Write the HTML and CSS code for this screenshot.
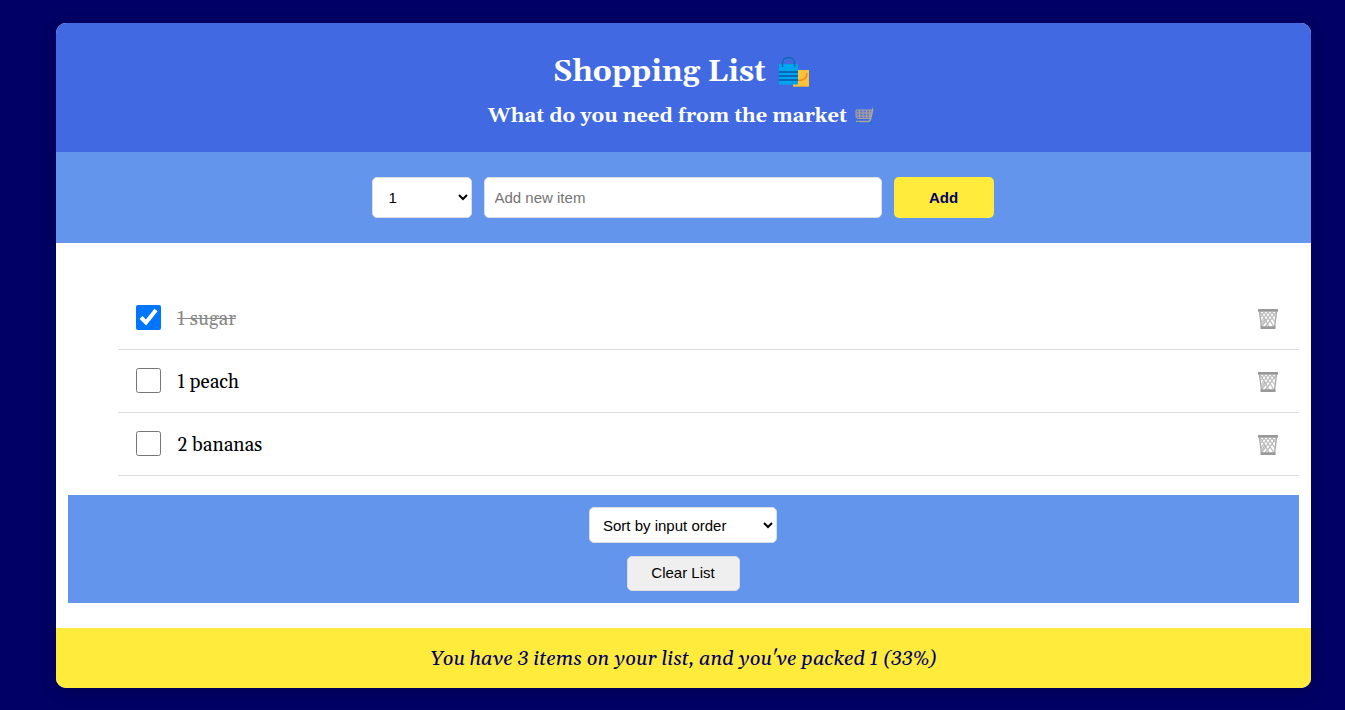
FILE: index.html
```html
<!DOCTYPE html>
<html lang="en">
<head>
<meta charset="utf-8">
<meta name="viewport" content="width=device-width, initial-scale=1">
<title>Shopping List</title>
<link rel="stylesheet" href="styles.css">
</head>
<body>
<svg class="defs" aria-hidden="true">
  <symbol id="bin" viewBox="0 0 22 22">
    <path d="M2.500 3.500 4.500 19.500M19.500 3.500 17.500 19.500" stroke="#aaa" stroke-width="1.4" fill="none"/>
    <path d="M3 4 8 11 4 17M7 4 14 14 17 19M11 4 18 14M15 4 18 8M19 4 12 14 8 19M15 4 8 14 5 18M11 4 4 14M7 4 4 9M8 11 12 19" stroke="#bcbcbc" stroke-width="1.3" fill="none"/>
    <path d="M1 1H21V3.700H1zM3.500 18.200H18.500V21H3.500z" fill="#999"/>
  </symbol>
</svg>
<main class="card">
  <header class="header">
    <h1 class="title">Shopping List
      <svg class="bags" viewBox="0 0 32 32" aria-hidden="true">
        <path d="M15 14H31V29.500Q31 31 29.500 31H15z" fill="#fcc23c"/>
        <path d="M15 30.500H30" stroke="#c9a354"/>
        <path d="M20 24.500C26 24.500 29 22 29 17" stroke="#f7861c" stroke-width="1.500" fill="none"/>
        <path d="M1 8H20V28.500H1z" fill="#00a4ef"/>
        <path d="M1 16H20M1 20H20M1 24H20" stroke="#0669b5" stroke-width="2"/>
        <path d="M4.500 11V7C4.500-.500 16.500-.500 16.500 7V11" stroke="#0669b5" stroke-width="1.500" fill="none"/>
      </svg>
    </h1>
    <h2 class="subtitle">What do you need from the market
      <svg class="cart" viewBox="0 0 20 18" aria-hidden="true">
        <path d="M1 3H17L15 11.500H3Q1 11.500 1 9z" fill="#a8a29c" fill-opacity=".3"/>
        <path d="M1 3H17L15 11.500H3Q1 11.500 1 9zM1 6H16M1 9H15.500M4.500 3V11.500M8 3V11.500M11.500 3V11.500M14.500 3V11" stroke="#a8a29c" stroke-width="1" fill="none"/>
        <path d="M19 1.500H18L15.500 12.500 14 14.500H1" stroke="#aaa49e" stroke-width="1.500" fill="none"/>
        <circle cx="3" cy="16" r="1.300" fill="#147fc0"/><circle cx="16" cy="16" r="1.300" fill="#147fc0"/>
        <path d="M18 1.500H20" stroke="#147fc0" stroke-width="1.500"/>
      </svg>
    </h2>
  </header>
  <form class="add-form">
    <select class="control quantity" aria-label="Quantity"><option>1</option><option>2</option><option>3</option></select>
    <input class="control new-item" type="text" placeholder="Add new item" aria-label="New item">
    <button class="add-button" type="button">Add</button>
  </form>
  <section class="content">
    <ul class="items">
      <li class="item packed"><input class="check" type="checkbox" id="sugar" checked><label class="name" for="sugar">1 sugar</label><button class="remove" type="button" aria-label="Remove sugar"><svg class="bin"><use href="#bin"/></svg></button></li>
      <li class="item"><input class="check" type="checkbox" id="peach"><label class="name" for="peach">1 peach</label><button class="remove" type="button" aria-label="Remove peach"><svg class="bin"><use href="#bin"/></svg></button></li>
      <li class="item"><input class="check" type="checkbox" id="bananas"><label class="name" for="bananas">2 bananas</label><button class="remove" type="button" aria-label="Remove bananas"><svg class="bin"><use href="#bin"/></svg></button></li>
    </ul>
    <div class="actions">
      <select class="control sort" aria-label="Sort items"><option>Sort by input order</option><option>Sort by name</option><option>Sort by packed status</option></select>
      <button class="control clear" type="button">Clear List</button>
    </div>
  </section>
  <footer class="stats">You have 3 items on your list, and you've packed 1 (33%)</footer>
</main>
</body>
</html>
```
FILE: styles.css
```css
* { box-sizing: border-box; }

body {
  margin: 0;
  padding: 23px 34px 22px 56px;
  background: #000066;
  color: #000;
  font-family: Georgia, Gelasio, "Liberation Serif", serif;
  font-variant-numeric: lining-nums;
}

.defs { position: absolute; width: 0; height: 0; }

.card {
  overflow: hidden;
  border-radius: 10px;
  background: #fff;
  box-shadow: 0 4px 20px rgba(0, 0, 0, 0.2);
}

.header {
  padding: 29px 24px 23px 20px;
  background: #4169e1;
  color: #fff;
}

.title, .subtitle {
  display: flex;
  align-items: center;
  justify-content: center;
  margin: 0;
}

.title { gap: 12px; font-size: 30px; line-height: 40px; }
.subtitle { gap: 8px; margin-top: 11px; font-size: 20px; line-height: 26px; }
.bags { width: 32px; height: 32px; }
.cart { width: 20px; height: 18px; }

.add-form {
  display: flex;
  justify-content: center;
  gap: 12px;
  padding: 25px 22px 25px 20px;
  background: #6495ed;
}

.control {
  border: 1px solid #ddd;
  border-radius: 5px;
  background: #fff;
  color: #000;
  font-family: "Liberation Sans", Arial, sans-serif;
  font-size: 15px;
}

.quantity { width: 100px; height: 41px; padding: 0 0 0 12px; }
.new-item { width: 398px; height: 41px; padding: 0 10px; }

.add-button {
  width: 100px;
  height: 41px;
  border: 0;
  border-radius: 5px;
  background: #ffeb3b;
  color: #000066;
  font: bold 15px "Liberation Sans", Arial, sans-serif;
}

.content { padding: 44px 12px 25px; }

.items {
  margin: 0 0 19px;
  padding: 0 0 0 50px;
  list-style: none;
}

.item {
  display: flex;
  align-items: center;
  height: 63px;
  padding: 0 18px 1px;
  border-bottom: 1px solid #ddd;
}

.check { width: 25px; height: 25px; margin: 0 16px 0 0; accent-color: #0075ff; }
.name { flex: 1; padding-top: 2px; font-size: 19px; line-height: 24px; }
.packed .name { color: #888; text-decoration: line-through; }
.remove { display: flex; padding: 3px 2px 0 0; border: 0; background: none; }
.bin { width: 22px; height: 22px; }

.actions {
  display: flex;
  flex-direction: column;
  align-items: center;
  gap: 13px;
  padding: 12px 13px 12px 12px;
  background: #6495ed;
}

.sort { width: 188px; height: 36px; padding: 0 0 0 9px; }
.clear { width: 113px; height: 35px; padding: 0 6px 2px; background: #efefef; }

.stats {
  padding: 16px 20px 14px;
  background: #ffeb3b;
  color: #000066;
  font-size: 20px;
  font-style: italic;
  line-height: 30px;
  text-align: center;
}
```
